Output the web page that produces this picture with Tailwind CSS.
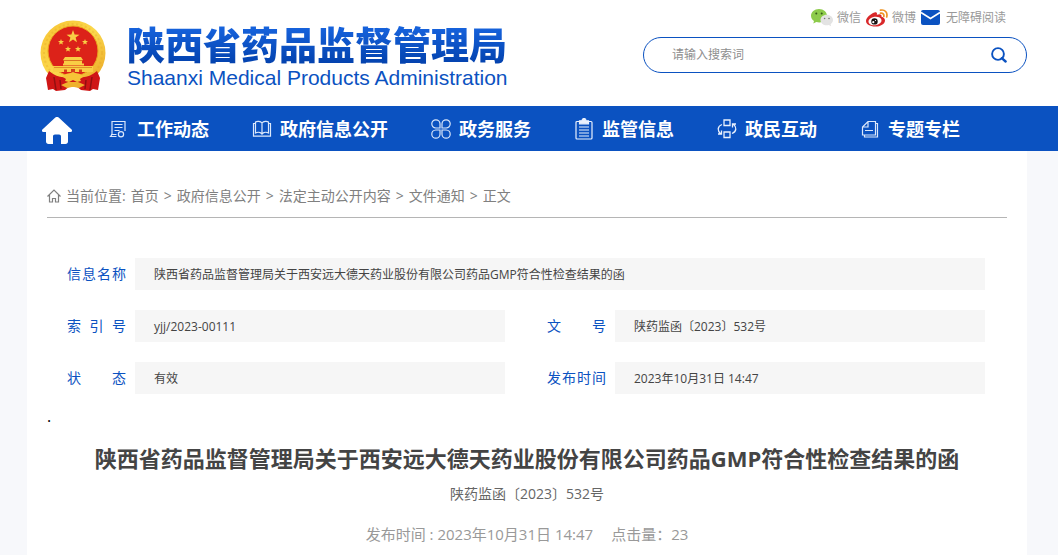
<!DOCTYPE html>
<html lang="zh-CN">
<head>
  <meta charset="UTF-8">
  <meta name="viewport" content="width=device-width, initial-scale=1.0">
  <title>陕西省药品监督管理局</title>
  <script src="https://cdn.jsdelivr.net/npm/@tailwindcss/browser@4"></script>
</head>
<body class="bg-[#f7f8fb] min-h-screen flex flex-col text-xs text-[#444] font-['Open_Sans','Noto_Sans_CJK_SC',sans-serif]">
  <!-- Header -->
  <header class="bg-white pr-1">
    <div class="max-w-[1000px] h-[106px] mx-auto flex justify-between">
      <a href="#" class="flex pl-3 pt-5">
        <svg class="w-[68px] h-[72px]" viewBox="0 0 68 72">
          <defs>
            <linearGradient id="gold" x1="0" y1="0" x2="1" y2="1">
              <stop offset="0" stop-color="#f7c332"></stop>
              <stop offset="0.5" stop-color="#fbd84c"></stop>
              <stop offset="1" stop-color="#e9a322"></stop>
            </linearGradient>
          </defs>
          <circle cx="34" cy="33" r="32.500" fill="url(#gold)"></circle>
          <circle cx="34" cy="33" r="29" fill="none" stroke="#dc9820" stroke-width="2" stroke-dasharray="2 2.500" opacity="0.25"></circle>
          <circle cx="34" cy="31" r="25" fill="#dc2219" stroke="#e9a41f"></circle>
          <g fill="#f9ce45">
            <path d="M34 10l1.600 4.600 4.900.1-3.900 2.900 1.400 4.700-4-2.800-4 2.800 1.400-4.700-3.900-2.900 4.900-.1z"></path>
            <path d="M22 19l.8 2 2.200.1-1.700 1.300.6 2.200-1.900-1.200-1.900 1.200.6-2.200-1.700-1.300 2.200-.1zM46 19l.8 2 2.200.1-1.700 1.300.6 2.200-1.900-1.200-1.900 1.200.6-2.200-1.700-1.300 2.200-.1zM29 26l.8 2 2.200.1-1.700 1.300.6 2.200-1.900-1.200-1.900 1.200.6-2.200-1.700-1.300 2.200-.1zM39 26l.8 2 2.200.1-1.700 1.300.6 2.200-1.900-1.200-1.900 1.200.6-2.200-1.700-1.300 2.200-.1z"></path>
            <path d="M26 37h16l2 3H24zM25 40.500h18v3H25zM24 43.500h21v2H24zM14 46h40v6H14z"></path>
          </g>
          <path d="M15 47.500h38M24 40.500h20" stroke="#d4761c" stroke-width="0.700"></path>
          <path d="M32 49h4v3h-4zM25 49.500h3V52h-3zM40 49.500h3V52h-3z" fill="#d4401c"></path>
          <path d="M10 51c6 5 12 7 17 6h14c5 1 11-1 17-6l3 7-2 12-5-1-3 2-9-1-5-4h-6l-5 4-9 1-3-2-5 1-2-12z" fill="#cf1616"></path>
          <path d="M15 57l2 13M53 57l-2 13M21 60l1 9M47 60l-1 9" stroke="#921010" stroke-width="1.500"></path>
          <path d="M24 57c3-5 7-3 10-5 3 2 7 0 10 5l-3 2 1 2-4 1-4-2-4 2-4-1 1-2z" fill="#f6c437"></path>
          <path d="M22 65l7-3h10l7 3-6 3-5-1h-2l-5 1z" fill="#efb12d"></path>
        </svg>
        <span class="pl-5">
          <span class="block text-[38px] leading-[46px] font-black font-['Noto_Sans_CJK_SC',sans-serif] bg-linear-to-b from-[#1a69e6] to-[#0340ab] bg-clip-text text-transparent">陕西省药品监督管理局</span>
          <span class="block pt-0.5 text-[21px] leading-5 font-['Liberation_Sans',sans-serif] text-[#0b52c1]">Shaanxi Medical Products Administration</span>
        </span>
      </a>
      <div class="w-[384px] pt-2">
        <div class="flex justify-end items-center pr-[21px] h-5 text-[#999]">
          <a href="#" class="flex items-center gap-1">
            <svg class="w-[22px] h-[18px]" viewBox="0 0 22 18">
              <path d="M8 0C3.400 0 0 3 0 6.800c0 2.200 1.100 4 3 5.200L2.300 14.600 5.300 13c5.700 1.500 10.700-1.500 10.700-6.200C16 3 12.600 0 8 0z" fill="#8dcb4b"></path>
              <circle cx="5.300" cy="4.600" r="1" fill="#35591a"></circle>
              <circle cx="10.700" cy="4.600" r="1" fill="#35591a"></circle>
              <path d="M15.700 5.700c-3.500 0-6.200 2.300-6.200 5.300s2.700 5.300 6.200 5.300c.8 0 1.500-.1 2.200-.3l2.200 1.300-.5-2.100c1.500-1 2.400-2.500 2.400-4.200 0-3-2.800-5.300-6.300-5.300z" fill="#e3e3e3"></path>
              <circle cx="13.600" cy="9.500" r="0.800" fill="#777"></circle>
              <circle cx="18" cy="9.500" r="0.800" fill="#777"></circle>
            </svg>
            <span>微信</span>
          </a>
          <a href="#" class="flex items-center gap-1 ml-[5px]">
            <svg class="w-[22px] h-[18px]" viewBox="0 0 22 18">
              <path d="M8.500 3.500c2-.8 3 .3 2.300 2.300 3-1.200 5.300-.5 4.700 1.900 2.300.7 3.500 1.800 3.500 3.700 0 3.500-4.500 6.100-9.700 6.100C4 17.500 0 15.200 0 12c0-3.300 4.500-7.200 8.500-8.500z" fill="#d9282a"></path>
              <ellipse cx="9" cy="12" rx="6.600" ry="4.300" fill="#fff" transform="rotate(-8 9 12)"></ellipse>
              <circle cx="8.500" cy="12.400" r="3.200" fill="#171313"></circle>
              <circle cx="7.300" cy="13.200" r="1.100" fill="#fff"></circle>
              <circle cx="9.500" cy="11.500" r="0.600" fill="#fff"></circle>
              <path d="M14.500 4.200c2.300-.5 3.800 1 3.300 3.300M14.500 1.200c4.300-1 7.400 2.200 6.200 6.800" fill="none" stroke="#ee9425" stroke-width="1.700" stroke-linecap="round"></path>
            </svg>
            <span>微博</span>
          </a>
          <a href="#" class="flex items-center gap-[5px] ml-[5px]">
            <svg class="w-5 h-[18px]" viewBox="0 0 20 18">
              <rect y="1" width="19" height="15" rx="2" fill="#0b52c1"></rect>
              <path d="M0 3.500l9.500 6 9.500-6" fill="none" stroke="#fff" stroke-width="1.600"></path>
            </svg>
            <span>无障碍阅读</span>
          </a>
        </div>
        <form class="flex items-center h-9 mt-[9px] pl-7 pr-[19px] rounded-full border border-[#0b52c1]">
          <input type="text" aria-label="搜索" placeholder="请输入搜索词" class="flex-1 min-w-0 outline-none text-xs placeholder:text-[#8e8e8e]">
          <button type="button" aria-label="搜索" class="w-4 h-4">
            <svg class="w-4 h-4" viewBox="0 0 16 16" fill="none" stroke="#0b52c1">
              <circle cx="7" cy="7" r="5.900" stroke-width="1.900"></circle>
              <path d="M10.800 11.200l3.800 3.300" stroke-width="2.400" stroke-linecap="round"></path>
            </svg>
          </button>
        </form>
      </div>
    </div>
  </header>

  <!-- Navigation -->
  <nav class="bg-[#0b52c1] pr-1 text-white">
    <div class="max-w-[1000px] h-[45px] mx-auto pl-[15px] flex items-center text-lg font-bold whitespace-nowrap">
      <a href="#" aria-label="首页" class="mr-[37px] pt-1">
        <svg class="w-[30px] h-7" viewBox="0 0 30 28" fill="currentColor">
          <path d="M15 0c1 0 1.500.4 2.200 1l12.400 11.600c1 1 .6 2.400-1 2.400H26v9.500c0 1.500-1 2.500-2.500 2.500H19v-7.500c0-1.300-.7-2-2-2h-4c-1.300 0-2 .7-2 2V27H6.500C5 27 4 26 4 24.500V15H1.400c-1.600 0-2-1.400-1-2.400L12.800 1c.7-.6 1.200-1 2.200-1z"></path>
        </svg>
      </a>
      <div class="flex gap-[43px]">
        <a href="#" class="flex items-center gap-2">
          <svg class="w-5 h-5" viewBox="0 0 20 20" fill="none" stroke="#dce8fb" stroke-width="1.200">
            <path d="M7.500 17.500H1.500l1.500-2V2.500h13V12M3 15V2.500M5.500 5.500h8M5.500 8.500h8M5.500 11.500h5M2 15.500h5.500"></path>
            <circle cx="12" cy="15.300" r="2.600"></circle>
          </svg>
          <span>工作动态</span>
        </a>
        <a href="#" class="flex items-center gap-2">
          <svg class="w-5 h-5" viewBox="0 0 20 20" fill="none" stroke="#dce8fb" stroke-width="1.200">
            <path d="M10 4C8.500 2 5 2 3.500 3v11c2-1 5-.8 6.500 1 1.500-1.800 4.500-2 6.500-1V3C15 2 11.500 2 10 4zM10 4v11M3.500 4.500h-2v12.700h17V4.500h-2"></path>
          </svg>
          <span>政府信息公开</span>
        </a>
        <a href="#" class="flex items-center gap-2">
          <svg class="w-5 h-5" viewBox="0 0 20 20" fill="none" stroke="#dce8fb" stroke-width="1.200">
            <path d="M9 9H4.800A4.100 4.100 0 1 1 9 4.800zM11 9h4.200A4.100 4.100 0 1 0 11 4.800zM9 11H4.800A4.100 4.100 0 1 0 9 15.200zM11 11h4.200A4.100 4.100 0 1 1 11 15.200z"></path>
          </svg>
          <span>政务服务</span>
        </a>
        <a href="#" class="flex items-center gap-2">
          <svg class="w-5 h-[22px]" viewBox="0 0 20 22" fill="none" stroke="#eaf1fd" stroke-width="1.200">
            <path d="M6 3.500H3a1 1 0 0 0-1 1V20a1 1 0 0 0 1 1h14a1 1 0 0 0 1-1V4.500a1 1 0 0 0-1-1H14M5 9h10M5 12h10M5 15h10M5 18h10"></path>
            <path d="M5.500 2.800H8c0-3 4-3 4 0h2.500v3h-9z" fill="#eaf1fd"></path>
          </svg>
          <span>监管信息</span>
        </a>
        <a href="#" class="flex items-center gap-2">
          <svg class="w-5 h-5" viewBox="0 0 20 20" fill="none" stroke="#eaf1fd" stroke-width="1.300">
            <path d="M7 1h6v5.500H7zM7 13h6v5.500H7zM5 5.500C0 7.500.3 12 3.800 15M1 15h3.500v-3.500M15 14.500c5-2 4.700-6.500 1.200-9.500M19 5h-3.500v3.500"></path>
          </svg>
          <span>政民互动</span>
        </a>
        <a href="#" class="flex items-center gap-2">
          <svg class="w-5 h-5" viewBox="0 0 20 20" fill="none" stroke="#dce8fb" stroke-width="1.200">
            <path d="M8 2.500h7.500v13.500H2.500V8zM8 2.500V8H2.500M5 11.500h8M15.500 4.500h2v13.500H4.500v-2"></path>
          </svg>
          <span>专题专栏</span>
        </a>
      </div>
    </div>
  </nav>

  <!-- Content -->
  <div class="flex-1 flex pr-1">
    <main class="w-full max-w-[1000px] mx-auto px-5 bg-white">
      <div class="flex items-center gap-[5px] h-[67px] pt-6 border-b border-[#b5b5b5] text-sm text-[#808080]">
        <svg class="w-[14px] h-[14px]" viewBox="0 0 14 14" fill="none" stroke="#808080" stroke-width="1.200">
          <path d="M.5 7.500L7 1l6.500 6.500M2.500 6v7H5.500V9.500h3V13h3V6"></path>
        </svg>
        <span>当前位置:</span>
        <a href="#">首页</a>
        <span>&gt;</span>
        <a href="#">政府信息公开</a>
        <span>&gt;</span>
        <a href="#">法定主动公开内容</a>
        <span>&gt;</span>
        <a href="#">文件通知</a>
        <span>&gt;</span>
        <span>正文</span>
      </div>

      <dl class="grid grid-cols-2 gap-x-[42px] gap-y-5 pt-10 pl-5 pr-[22px] leading-[34px]">
        <div class="col-span-2 h-8 flex gap-[9px]">
          <dt class="w-[59px] text-sm leading-8 text-[#0b52c1] [text-align-last:justify]">信息名称</dt>
          <dd class="flex-1 pl-[19px] bg-[#f6f6f6]">陕西省药品监督管理局关于西安远大德天药业股份有限公司药品GMP符合性检查结果的函</dd>
        </div>
        <div class="h-8 flex gap-[9px]">
          <dt class="w-[59px] text-sm leading-8 text-[#0b52c1] [text-align-last:justify]">索引号</dt>
          <dd class="flex-1 pl-[19px] bg-[#f6f6f6]">yjj/2023-00111</dd>
        </div>
        <div class="h-8 flex gap-[9px]">
          <dt class="w-[59px] text-sm leading-8 text-[#0b52c1] [text-align-last:justify]">文号</dt>
          <dd class="flex-1 pl-[19px] bg-[#f6f6f6]">陕药监函〔2023〕532号</dd>
        </div>
        <div class="h-8 flex gap-[9px]">
          <dt class="w-[59px] text-sm leading-8 text-[#0b52c1] [text-align-last:justify]">状态</dt>
          <dd class="flex-1 pl-[19px] bg-[#f6f6f6]">有效</dd>
        </div>
        <div class="h-8 flex gap-[9px]">
          <dt class="w-[59px] text-sm leading-8 text-[#0b52c1] [text-align-last:justify]">发布时间</dt>
          <dd class="flex-1 pl-[19px] bg-[#f6f6f6]">2023年10月31日 14:47</dd>
        </div>
      </dl>

      <p class="pt-2.5 text-base leading-6 text-black">.</p>

      <article class="text-center">
        <h1 class="pt-3.5 text-[22px] leading-8 font-bold whitespace-nowrap">陕西省药品监督管理局关于西安远大德天药业股份有限公司药品GMP符合性检查结果的函</h1>
        <p class="pt-2 text-sm leading-6 text-[#666]">陕药监函〔2023〕532号</p>
        <p class="pt-4 text-[15px] leading-6 text-[#999]"><span>发布时间 : 2023年10月31日 14:47</span><span class="ml-[18px]">点击量：23</span></p>
      </article>
    </main>
  </div>
</body>
</html>
